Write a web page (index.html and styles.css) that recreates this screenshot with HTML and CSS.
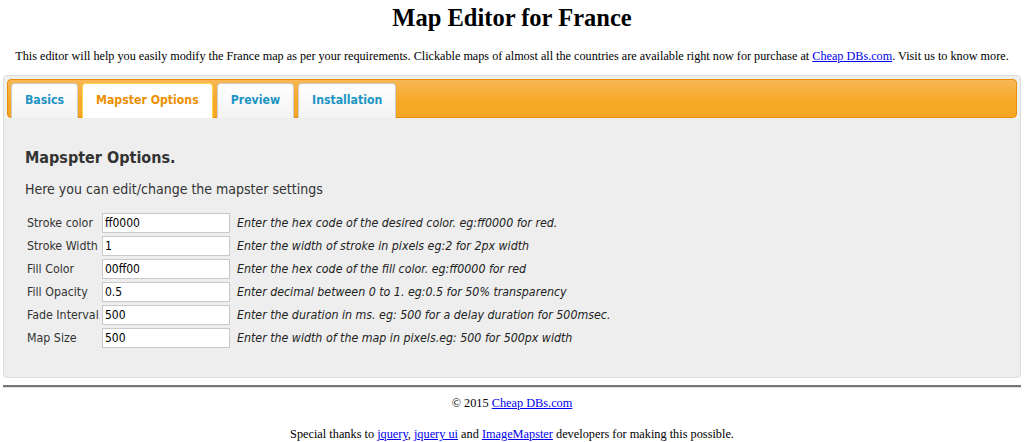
FILE: index.html
```html
<!DOCTYPE html>
<html lang="en">
<head>
    <meta charset="UTF-8">
    <title>Map Editor for France</title>
    <link rel="stylesheet" href="styles.css">
</head>
<body>
    <h1 class="title">Map Editor for France</h1>
    <p class="intro">This editor will help you easily modify the France map as per your requirements. Clickable maps of almost all the countries are available right now for purchase at <a href="#">Cheap DBs.com</a>. Visit us to know more.</p>

    <div class="tabs">
        <ul class="tab-nav">
            <li class="tab"><a href="#">Basics</a></li>
            <li class="tab active"><a href="#">Mapster Options</a></li>
            <li class="tab"><a href="#">Preview</a></li>
            <li class="tab"><a href="#">Installation</a></li>
        </ul>
        <div class="panel">
            <h3 class="panel-title">Mapspter Options.</h3>
            <p class="panel-text">Here you can edit/change the mapster settings</p>
            <table class="options">
                <tr>
                    <td class="label">Stroke color</td>
                    <td><input type="text" class="field" value="ff0000"></td>
                    <td class="hint">Enter the hex code of the desired color. eg:ff0000 for red.</td>
                </tr>
                <tr>
                    <td class="label">Stroke Width</td>
                    <td><input type="text" class="field" value="1"></td>
                    <td class="hint">Enter the width of stroke in pixels eg:2 for 2px width</td>
                </tr>
                <tr>
                    <td class="label">Fill Color</td>
                    <td><input type="text" class="field" value="00ff00"></td>
                    <td class="hint">Enter the hex code of the fill color. eg:ff0000 for red</td>
                </tr>
                <tr>
                    <td class="label">Fill Opacity</td>
                    <td><input type="text" class="field" value="0.5"></td>
                    <td class="hint">Enter decimal between 0 to 1. eg:0.5 for 50% transparency</td>
                </tr>
                <tr>
                    <td class="label">Fade Interval</td>
                    <td><input type="text" class="field" value="500"></td>
                    <td class="hint">Enter the duration in ms. eg: 500 for a delay duration for 500msec.</td>
                </tr>
                <tr>
                    <td class="label">Map Size</td>
                    <td><input type="text" class="field" value="500"></td>
                    <td class="hint">Enter the width of the map in pixels.eg: 500 for 500px width</td>
                </tr>
            </table>
        </div>
    </div>

    <hr class="rule">
    <p class="footer">&copy; 2015 <a href="#">Cheap DBs.com</a></p>
    <p class="footer thanks">Special thanks to <a href="#">jquery</a>, <a href="#">jquery ui</a> and <a href="#">ImageMapster</a> developers for making this possible.</p>
</body>
</html>
```
FILE: styles.css
```css
body
{
    margin: 0 3px;
    font-family: "Liberation Serif", "Times New Roman", serif;
    color: #000;
    background-color: #fff;
}
a
{
    color: #0000ee;
}
.title
{
    margin: 4px 0 0 0;
    font-size: 24.5px;
    line-height: 28px;
    text-align: center;
}
.intro
{
    margin: 17px 0 0 0;
    font-size: 12.2px;
    line-height: 15px;
    text-align: center;
    white-space: nowrap;
}
.tabs
{
    margin-top: 11px;
    padding: 3px;
    border: 1px solid #dddddd;
    border-radius: 4px;
    background-color: #eeeeee;
    font-family: Tahoma, "DejaVu Sans Condensed", sans-serif;
}
.tab-nav
{
    display: flex;
    gap: 4px;
    margin: 0;
    padding: 3px 3px 0 3px;
    list-style: none;
    border: 1px solid #e78f08;
    border-radius: 4px;
    background: linear-gradient(#f8b856, #f6a828 55%, #f5a623);
}
.tab
{
    margin-bottom: -1px;
    border: 1px solid #cccccc;
    border-bottom: 0;
    border-radius: 4px 4px 0 0;
    background: linear-gradient(#ffffff, #f3f3f3);
}
.tab a
{
    display: block;
    padding: 8px 13px 8px 13px;
    font-size: 12.2px;
    font-weight: bold;
    line-height: 17px;
    color: #1c94c4;
    text-decoration: none;
}
.tab.active
{
    border-color: #fbd850;
    background: #ffffff;
    padding-bottom: 1px;
}
.tab.active a
{
    color: #eb8f00;
}
.panel
{
    padding: 30px 18px 23px 18px;
    color: #333333;
}
.panel-title
{
    margin: 0;
    font-size: 16px;
    font-weight: bold;
    line-height: 20px;
    color: #333333;
}
.panel-text
{
    margin: 12px 0 12px 0;
    font-size: 14px;
    line-height: 18px;
}
.options
{
    border-spacing: 2px 3px;
    font-size: 12.3px;
}
.options td
{
    padding: 0;
    height: 20px;
}
.label
{
    width: 73px;
    padding-right: 1px;
    white-space: nowrap;
}
.field
{
    box-sizing: border-box;
    width: 128px;
    height: 20px;
    margin: 0;
    padding: 1px 2px;
    border: 1px solid #c9c9c9;
    background: #fff;
    font-family: Tahoma, "DejaVu Sans Condensed", sans-serif;
    font-size: 12px;
    color: #000;
}
.hint
{
    padding-left: 5px !important;
    font-style: italic;
    color: #222222;
}
.rule
{
    margin: 7px 0 0 0;
    border: 0;
    border-top: 2px solid #777777;
    border-bottom: 1px solid #dddddd;
}
.footer
{
    margin: 8px 0 0 0;
    font-size: 12.3px;
    line-height: 15px;
    text-align: center;
}
.thanks
{
    margin-top: 16px;
}
```
